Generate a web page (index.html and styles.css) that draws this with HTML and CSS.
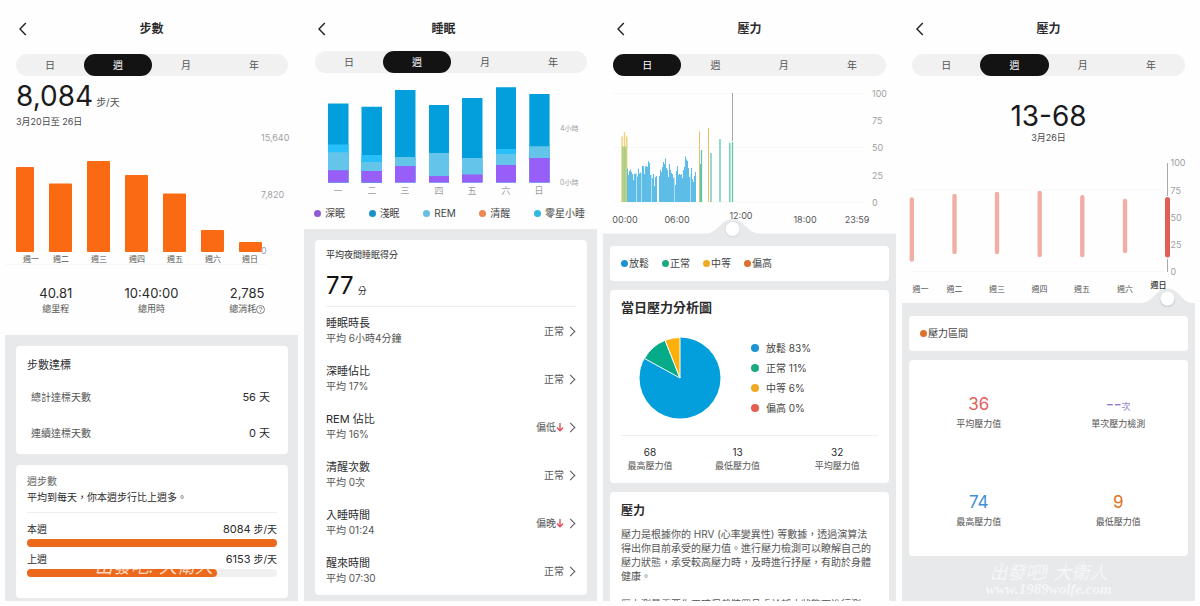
FILE: index.html
```html
<!DOCTYPE html>
<html lang="zh-Hant">
<head>
<meta charset="utf-8">
<meta name="viewport" content="width=device-width, initial-scale=1">
<title>健康數據</title>
<link rel="stylesheet" href="styles.css">
</head>
<body>
<main class="board">

<section class="panel">
  <header class="bar">
    <button class="back" aria-label="返回"><svg width="8" height="14" viewBox="0 0 8 14"><path d="M6.800 1 1 7l5.800 6"/></svg></button>
    <h1>步數</h1>
  </header>
  <nav class="tabs"><button>日</button><button class="on">週</button><button>月</button><button>年</button></nav>
  <div class="hero"><span class="huge">8,084</span><span class="unit">步/天</span></div>
  <p class="date">3月20日至 26日</p>
  <svg class="chart" viewBox="0 130 293 138" role="img" aria-label="每日步數">
    <path class="grid" d="M0 264.500H262"/>
    <g fill="#f96a12">
      <rect x="11" y="167" width="18" height="85" rx="1"/>
      <rect x="44" y="183.500" width="23" height="68.500" rx="1"/>
      <rect x="82" y="161" width="23" height="91" rx="1"/>
      <rect x="120" y="175" width="23" height="77" rx="1"/>
      <rect x="158" y="193.500" width="23" height="58.500" rx="1"/>
      <rect x="196" y="230" width="23" height="22" rx="1"/>
      <rect x="234" y="242" width="23" height="10" rx="1"/>
    </g>
    <g class="axis"><text x="256" y="141">15,640</text><text x="256" y="198">7,820</text><text x="256" y="254">0</text></g>
    <g class="days"><text x="26" y="262">週一</text><text x="56" y="262">週二</text><text x="94" y="262">週三</text><text x="132" y="262">週四</text><text x="170" y="262">週五</text><text x="208" y="262">週六</text><text x="245" y="262">週日</text></g>
  </svg>
  <dl class="totals">
    <div><dd>40.81</dd><dt>總里程</dt></div>
    <div><dd>10:40:00</dd><dt>總用時</dt></div>
    <div><dd>2,785</dd><dt>總消耗<svg width="9" height="9" viewBox="0 0 9 9"><circle cx="4.500" cy="4.500" r="4"/><path d="M3.200 3.600a1.300 1.200 0 1 1 2 1q-.7.4-.7 1M4.500 6.300v.8"/></svg></dt></div>
  </dl>
  <div class="sheet">
    <article class="card goal">
      <h2>步數達標</h2>
      <p><span>總計達標天數</span><b>56 天</b></p>
      <p><span>連續達標天數</span><b>0 天</b></p>
    </article>
    <article class="card weekly">
      <h3>週步數</h3>
      <p>平均到每天，你本週步行比上週多。</p>
      <hr>
      <div class="week"><span>本週</span><span><b>8084</b> 步/天</span></div>
      <div class="track"><div class="fill" style="width:100%"></div></div>
      <div class="week"><span>上週</span><span><b>6153</b> 步/天</span></div>
      <div class="track"><div class="fill" style="width:76%"><i>出發吧! 大衛人</i></div></div>
    </article>
  </div>
</section>

<section class="panel sleep">
  <header class="bar">
    <button class="back" aria-label="返回"><svg width="8" height="14" viewBox="0 0 8 14"><path d="M6.800 1 1 7l5.800 6"/></svg></button>
    <h1>睡眠</h1>
  </header>
  <nav class="tabs"><button>日</button><button class="on">週</button><button>月</button><button>年</button></nav>
  <svg class="chart" viewBox="0 73 293 127" role="img" aria-label="每日睡眠">
    <path fill="#029fdc" d="M24 103.500h20.500v79H24zM57.500 106.800H78v76H57.500zM91 90h20.500v92.500H91zM125 105h20v77.500h-20zM158 98h20.500v84.500H158zM192 87.300h20v95.200h-20zM225.300 94h20.300v88.500h-20.300z"/>
    <path fill="#29bffa" d="M24 144.500h20.500v38H24zM57.500 155H78v27H57.500zM192 149h20v33h-20z"/>
    <path fill="#65c4ea" d="M24 152.300h20.500v30H24zM57.500 162H78v20H57.500zM91 157h20.500v25H91zM125 153h20v29h-20zM158 158h20.500v24H158zM192 154h20v28h-20zM225.300 146.300h20.300v36h-20.300z"/>
    <path fill="#975ef8" d="M24 170.300h20.500v12.200H24zM57.500 171H78v11.500H57.500zM91 166h20.500v16.500H91zM125 176h20v6.500h-20zM158 174.600h20.500v7.900H158zM192 165h20v17.500h-20zM225.300 158h20.300v24.500h-20.300z"/>
    <g class="axis small"><text x="256" y="130.500">4小時</text><text x="256" y="184.500">0小時</text></g>
    <g class="axis mid"><text x="34" y="194">一</text><text x="68" y="194">二</text><text x="101" y="194">三</text><text x="135" y="194">四</text><text x="168" y="194">五</text><text x="202" y="194">六</text><text x="235" y="194">日</text></g>
  </svg>
  <ul class="legend wide">
    <li class="violet">深眠</li><li class="deep">淺眠</li><li class="sky">REM</li><li class="peach">清醒</li><li class="cyan">零星小睡</li>
  </ul>
  <div class="sheet">
    <article class="card score">
      <h2>平均夜間睡眠得分</h2>
      <div class="points"><span>77</span><small>分</small></div>
      <hr>
      <a href="#"><span><b>睡眠時長</b><small>平均 6小時4分鐘</small></span><em>正常</em></a>
      <a href="#"><span><b>深睡佔比</b><small>平均 17%</small></span><em>正常</em></a>
      <a href="#"><span><b>REM 佔比</b><small>平均 16%</small></span><em>偏低<svg class="down" width="8" height="10" viewBox="0 0 8 10"><path d="M4 1v8M1 5.500l3 3.300 3-3.300"/></svg></em></a>
      <a href="#"><span><b>清醒次數</b><small>平均 0次</small></span><em>正常</em></a>
      <a href="#"><span><b>入睡時間</b><small>平均 01:24</small></span><em>偏晚<svg class="down" width="8" height="10" viewBox="0 0 8 10"><path d="M4 1v8M1 5.500l3 3.300 3-3.300"/></svg></em></a>
      <a href="#"><span><b>醒來時間</b><small>平均 07:30</small></span><em>正常</em></a>
    </article>
  </div>
</section>

<section class="panel stress">
  <header class="bar">
    <button class="back" aria-label="返回"><svg width="8" height="14" viewBox="0 0 8 14"><path d="M6.800 1 1 7l5.800 6"/></svg></button>
    <h1>壓力</h1>
  </header>
  <nav class="tabs"><button class="on">日</button><button>週</button><button>月</button><button>年</button></nav>
  <svg class="chart" viewBox="0 76 293 162" role="img" aria-label="當日壓力">
    <path class="grid" d="M10 93.500H262M10 147.500H262M10 202H262"/>
    <path stroke="#f0d27c" stroke-width="1.500" d="M19 202V136.500M21.500 202V132M23.700 202V136.500"/>
    <path fill="#9ccb7e" fill-opacity=".8" d="M19 202V146.500h4.500V202z"/>
    <path stroke="#5dbde6" stroke-width="1.050" fill="none" d="M24.500 202V168.500M25.500 202V175M26.500 202V171M27.500 202V169.500M28.500 202V172M29.500 202V174M30.500 202V180M31.500 202V174M32.500 202V173.500M34.500 202V176.500M35.500 202V168.500M36.500 202V173.500M37.500 202V172.500M39.500 202V166M40.500 202V166M41.500 202V174M42.500 202V166.500M43.500 202V166M44.500 202V167M45.500 202V161M46.500 202V163M47.500 202V175M49.500 202V178M50.500 202V174M51.500 202V186M52.500 202V177M53.500 202V176M56.500 202V176M57.500 202V170M58.500 202V172M59.500 202V167M60.500 202V162M61.500 202V164M62.500 202V158.500M63.500 202V168M64.500 202V170M65.500 202V177M66.500 202V164M67.500 202V170M68.500 202V173M69.500 202V174M70.500 202V178M72.500 202V185M73.500 202V171M74.500 202V166M75.500 202V175M76.500 202V174M77.500 202V175M78.500 202V174M79.500 202V178M80.500 202V170M81.500 202V167M82.500 202V156.500M83.500 202V159.500M84.500 202V161M85.500 202V168M86.500 202V177M88.500 202V168M89.500 202V179M90.500 202V182M91.500 202V176M92.500 202V172"/>
    <path stroke="#5dbde6" stroke-opacity=".45" d="M33.500 202V173M38.500 202V173M48.500 202V175M71.500 202V177M87.500 202V174"/>
    <path stroke="#efbd68" d="M96.500 202V131.500M105.500 202V128"/>
    <path stroke="#5fc6ae" stroke-width="1.300" d="M97.500 202V164M98.500 202V150M108 202V153M117 202V139M126.800 202V143M129.500 202V142"/>
    <path stroke="#a9a9ad" stroke-width="1" d="M129.500 141V93"/>
    <g class="axis"><text x="269" y="96.500">100</text><text x="269" y="124">75</text><text x="269" y="151">50</text><text x="269" y="178.500">25</text><text x="269" y="205.500">0</text></g>
    <path fill="#e7e9eb" d="M0 238V233.500H102C115 233.500 118 219 129.500 219S144 233.500 157 233.500H293V238z"/>
    <circle cx="129.500" cy="229.500" r="8" fill="#dadde1"/><circle cx="129.500" cy="229" r="7" fill="#fff"/>
    <g class="hours"><text x="22" y="223">00:00</text><text x="74" y="223">06:00</text><text x="138" y="219">12:00</text><text x="202" y="223">18:00</text><text x="254" y="223">23:59</text></g>
  </svg>
  <div class="sheet">
    <article class="card keys">
      <ul class="legend"><li class="blue">放鬆</li><li class="green">正常</li><li class="amber">中等</li><li class="orange">偏高</li></ul>
    </article>
    <article class="card analysis">
      <h2>當日壓力分析圖</h2>
      <div class="share">
        <svg width="82" height="82" viewBox="-41 -41 82 82" role="img" aria-label="壓力比例">
          <circle r="40.500" fill="#029fdc"/>
          <path fill="#05ab87" stroke="#fff" d="M0 0-35.500-19.500A40.500 40.500 0 0 1-14.900-37.700z"/>
          <path fill="#fdaf0a" stroke="#fff" d="M0 0-14.900-37.700A40.500 40.500 0 0 1 0-40.500z"/>
        </svg>
        <ul class="legend column"><li class="blue">放鬆 83%</li><li class="green">正常 11%</li><li class="amber">中等 6%</li><li class="coral">偏高 0%</li></ul>
      </div>
      <dl class="extremes">
        <div><dd>68</dd><dt>最高壓力值</dt></div>
        <div><dd>13</dd><dt>最低壓力值</dt></div>
        <div><dd>32</dd><dt>平均壓力值</dt></div>
      </dl>
    </article>
    <article class="card about">
      <h2>壓力</h2>
      <p>壓力是根據你的 HRV (心率變異性) 等數據，透過演算法得出你目前承受的壓力值。進行壓力檢測可以瞭解自己的壓力狀態，承受較高壓力時，及時進行抒壓，有助於身體健康。</p>
      <p>壓力測量需要你正確佩戴裝置且處於靜止狀態下進行測</p>
    </article>
  </div>
</section>

<section class="panel stress">
  <header class="bar">
    <button class="back" aria-label="返回"><svg width="8" height="14" viewBox="0 0 8 14"><path d="M6.800 1 1 7l5.800 6"/></svg></button>
    <h1>壓力</h1>
  </header>
  <nav class="tabs"><button>日</button><button class="on">週</button><button>月</button><button>年</button></nav>
  <div class="hero centered"><span class="huge">13-68</span></div>
  <p class="date centered">3月26日</p>
  <svg class="chart" viewBox="0 144 293 164" role="img" aria-label="每週壓力區間">
    <path class="grid" d="M10 190H262M10 271.500H262"/>
    <path stroke="#f1aea6" stroke-width="4.400" stroke-linecap="round" d="M9.800 199.500V259.500M52.500 196V252M95 194V252M137.700 193V255M180.300 197.300V255M223 201V251"/>
    <path stroke="#a9a9ad" d="M265.500 163V196M265.500 259V272"/>
    <path stroke="#e15f57" stroke-width="5" stroke-linecap="round" d="M265.500 199.500V255"/>
    <g class="axis"><text x="268.500" y="166">100</text><text x="268.500" y="193.500">75</text><text x="268.500" y="220.500">50</text><text x="268.500" y="248">25</text><text x="268.500" y="275">0</text></g>
    <path fill="#e7e9eb" d="M0 308V303H238C251 303 254 288.500 265.500 288.500S279 301 289 303H293V308z"/>
    <circle cx="265.500" cy="299.500" r="8" fill="#d5d8e0"/><circle cx="265.500" cy="298.500" r="7" fill="#fff"/>
    <g class="days"><text x="18.500" y="292">週一</text><text x="52.500" y="292">週二</text><text x="95" y="292">週三</text><text x="137.500" y="292">週四</text><text x="180" y="292">週五</text><text x="223" y="292">週六</text><text class="now" x="256.500" y="288">週日</text></g>
  </svg>
  <div class="sheet">
    <article class="card keys"><ul class="legend"><li class="orange">壓力區間</li></ul></article>
    <dl class="card figures">
      <div><dd class="t-red">36</dd><dt>平均壓力值</dt></div>
      <div><dd class="t-violet">--<small>次</small></dd><dt>單次壓力檢測</dt></div>
      <div><dd class="t-blue">74</dd><dt>最高壓力值</dt></div>
      <div><dd class="t-orange">9</dd><dt>最低壓力值</dt></div>
    </dl>
    <p class="credit">出發吧! 大衛人<span>www.1989wolfe.com</span></p>
  </div>
</section>

</main>
</body>
</html>
```
FILE: styles.css
```css
* { box-sizing: border-box; margin: 0; padding: 0; }
body {
  background: #fefefe;
  color: #2b2b2d;
  font-family: Inter, "Noto Sans CJK TC", sans-serif;
  font-size: 10px;
  line-height: 16px;
}
button { border: 0; background: none; font: inherit; color: inherit; cursor: pointer; }
ul { list-style: none; }
a { color: inherit; text-decoration: none; }
hr { border: 0; border-top: 1px solid #efefef; }
b, em, i, small { font-weight: 400; font-style: normal; }

.board {
  display: grid;
  grid-template-columns: repeat(4, 1fr);
  gap: 6px;
  height: calc(100vh - 5px);
  min-height: 400px;
  padding: 0 5px;
}
.panel { display: flex; flex-direction: column; min-width: 0; overflow: hidden; }

.bar {
  display: grid;
  grid-template-columns: 28px 1fr 28px;
  align-items: center;
  padding: 21px 0 17px;
}
.bar h1 { font-size: 12px; font-weight: 700; line-height: 16px; text-align: center; }
.back { display: flex; justify-content: flex-end; padding-right: 6px; }
.back svg { fill: none; stroke: #222; stroke-width: 1.4; }
.tabs {
  display: grid;
  grid-template-columns: repeat(4, 1fr);
  margin: 0 10px 0 11px;
  border-radius: 11px;
  background: #f1f1f2;
  color: #555;
}
.tabs button { height: 22px; border-radius: 11px; }
.tabs .on { background: #131314; color: #fff; }
.sleep .bar { padding-bottom: 14px; }
.sleep h1 { padding-right: 14px; }

.hero { display: flex; align-items: baseline; gap: 3px; margin: 4px 11px 0; color: #1b1b1d; }
.huge { font-size: 28px; line-height: 32px; }
.unit { color: #555; }
.date { margin: 2px 11px 0; font-size: 9px; color: #4a4a4c; }
.hero.centered { justify-content: center; margin-top: 24px; }
.date.centered { margin-top: 0; line-height: 12px; text-align: center; }

.chart { display: block; flex: none; width: 100%; height: auto; }
.chart text { font-size: 8px; }
.chart .small text { font-size: 7px; }
.chart .axis:not(.small) text, .chart .hours text { font-size: 9px; }
.grid { stroke: #f7f7f7; fill: none; }
.axis { fill: #a0a0a3; }
.axis.mid, .days, .hours { text-anchor: middle; }
.days { fill: #555; }
.days .now { fill: #333; font-weight: 500; }
.hours { fill: #555; }

.totals { display: grid; grid-template-columns: repeat(3, 1fr); padding: 17px 3px 18px; text-align: center; }
.totals div { display: flex; flex-direction: column; }
.totals dd { font-size: 13px; }
.totals dt { display: flex; align-items: center; justify-content: center; font-size: 9px; color: #555; }
.totals svg { fill: none; stroke: #555; stroke-width: .7; }

.sheet {
  display: flex;
  flex-direction: column;
  flex: 1 0 auto;
  gap: 11px;
  padding: 11px 10px 2px 11px;
  background: #e7e9eb;
}
.card { border-radius: 4px; background: #fff; }

.goal { padding: 11px 18px 13px 11px; }
.goal h2 { font-size: 11px; font-weight: 400; }
.goal p { display: flex; justify-content: space-between; padding-left: 4px; margin-top: 20px; color: #555; }
.goal h2 + p { margin-top: 16px; }
.goal b { font-size: 11px; color: #2b2b2d; }

.weekly { padding: 8px 11px 21px; }
.weekly h3 { font-size: 10px; font-weight: 400; color: #666; }
.weekly hr { margin: 7px 0 8px; }
.week { display: flex; justify-content: space-between; }
.week b { font-size: 11px; }
.track { height: 8px; margin: 2px 0 4px; border-radius: 4px; background: #f0f0f0; }
.track:last-child { margin-bottom: 0; }
.fill { position: relative; height: 8px; border-radius: 4px; background: #ec681a; }
.fill i {
  position: absolute;
  right: 4px;
  bottom: 0;
  font-size: 18px;
  font-style: italic;
  line-height: 20px;
  color: rgba(255, 255, 255, .75);
  white-space: nowrap;
}

.legend { display: flex; gap: 13px; line-height: 14px; color: #444; }
.legend li { display: flex; align-items: center; gap: 1px; white-space: nowrap; }
.legend li::before { content: ""; width: 7px; height: 7px; border-radius: 50%; background: var(--dot); }
.legend.wide { justify-content: space-between; gap: 0; padding: 6px 12px 9px 10px; }
.legend.wide li { gap: 4px; }
.legend.column { flex-direction: column; gap: 6px; }
.legend.column li { gap: 7px; }
.legend.column li::before { width: 8px; height: 8px; }
.violet { --dot: #925bd6; }
.deep { --dot: #1b91c9; }
.sky { --dot: #64bfe2; }
.peach { --dot: #ec8850; }
.cyan { --dot: #30b8df; }
.blue { --dot: #1c93d2; }
.green { --dot: #1daa82; }
.amber { --dot: #efa922; }
.orange { --dot: #dc702c; }
.coral { --dot: #e75d50; }

.score { padding: 7px 11px 0; }
.score h2 { font-size: 9px; font-weight: 400; }
.points { display: flex; align-items: baseline; gap: 4px; margin: 9px 0 6px; }
.points span { font-size: 24px; line-height: 28px; color: #111; }
.points small { font-size: 9px; line-height: 12px; }
.score a { display: flex; align-items: center; justify-content: space-between; padding: 9px 0; }
.score a b { display: block; font-size: 11px; line-height: 15px; }
.score a small { display: block; font-size: 10px; line-height: 15px; color: #555; }
.score em { display: flex; align-items: center; color: #555; }
.score em::after {
  content: "";
  width: 6px;
  height: 6px;
  margin: 0 2px 0 3px;
  border: solid #555;
  border-width: 1px 1px 0 0;
  transform: rotate(45deg);
}
.down { fill: none; stroke: #df4b55; stroke-width: 1.3; }

.stress .sheet { gap: 9px; padding: 8px 7px 0; }
.stress .bar + .tabs { margin-left: 10px; }
.keys { padding: 10px 11px 11px; }
.analysis { padding: 8px 11px 11px; }
.analysis h2 { font-size: 13px; font-weight: 700; line-height: 18px; }
.share { display: flex; align-items: center; gap: 30px; padding: 21px 0 16px 18px; }
.extremes {
  display: grid;
  grid-template-columns: 58fr 118fr 82fr;
  padding-top: 10px;
  border-top: 1px solid #efefef;
  text-align: center;
}
.extremes div { display: flex; flex-direction: column; line-height: 13px; }
.extremes dt { font-size: 9px; color: #555; }
.about { flex: 1 0 auto; padding: 10px 14px 11px 11px; border-radius: 4px 4px 0 0; }
.about h2 { font-size: 12px; font-weight: 700; line-height: 18px; margin-bottom: 7px; }
.about p { line-height: 14px; color: #555; }
.about p + p { margin-top: 14px; }

.figures { display: grid; grid-template-columns: 1fr 1fr; grid-auto-rows: 98px; text-align: center; }
.figures div { display: flex; flex-direction: column; justify-content: center; padding-top: 9px; }
.figures dd { height: 20px; font-size: 17px; line-height: 20px; }
.figures dd small { font-size: 9px; line-height: 12px; }
.figures dt { font-size: 9px; line-height: 20px; color: #555; }
.t-red { color: #e0605c; }
.t-violet { color: #9179cc; }
.t-blue { color: #3f8fd4; }
.t-orange { color: #e0741e; }
.credit { font-size: 18px; font-style: italic; line-height: 16px; text-align: center; color: #f4f6f7; }
.credit span { display: block; font-family: "Liberation Serif", serif; font-size: 15px; font-weight: 700; }
```
